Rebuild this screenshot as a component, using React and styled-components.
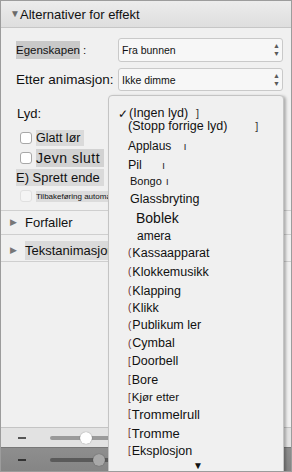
import React from "react";
import styled, { createGlobalStyle } from "styled-components";

const Global = createGlobalStyle`
  html, body { margin: 0; padding: 0; background: #f0f0f0; }
  body { font-family: "Liberation Sans", Arial, sans-serif; color: #111; }
`;

const Window = styled.div`
  position: relative;
  width: 292px;
  height: 472px;
  box-sizing: border-box;
  border: 1px solid #9c9c9c;
  background: #f0f0f0;
  display: flex;
  flex-direction: column;
  overflow: hidden;
`;

const Header = styled.div`
  height: 26px;
  flex: none;
  display: flex;
  align-items: center;
  gap: 1px;
  padding-left: 9px;
  background: linear-gradient(#ececec, #dedede);
  border-bottom: 1px solid #c6c6c6;
  font-size: 13px;
  color: #111;
`;

const Tri = styled.span`
  font-size: ${(p) => p.$size || 9}px;
  color: ${(p) => p.$color || "#6a6a6a"};
  line-height: 1;
  width: ${(p) => p.$w || 9}px;
`;

const Form = styled.div`
  padding: 10px 8px 0 0;
  display: flex;
  flex-direction: column;
  flex: none;
`;

const Row = styled.div`
  display: grid;
  grid-template-columns: 117px 1fr;
  align-items: center;
  height: ${(p) => p.$h}px;
  margin-top: ${(p) => p.$mt || 0}px;
`;

const Label = styled.span`
  justify-self: start;
  margin-left: ${(p) => p.$ml || 15}px;
  font-size: ${(p) => p.$size || 13}px;
  color: #111;
  white-space: nowrap;
`;

const Hl = styled.span`
  background: #c9c9c9;
  padding: 3px 0;
  margin-right: 3px;
`;

const Select = styled.div`
  height: 100%;
  box-sizing: border-box;
  border: 1px solid #c9c9c9;
  border-radius: 3px;
  background: #f7f7f7;
  display: flex;
  align-items: center;
  justify-content: space-between;
  padding: 0 2px 0 3px;
  font-size: 10.5px;
  color: #111;
`;

const Spin = styled.span`
  display: flex;
  flex-direction: column;
  font-size: 7px;
  line-height: 8px;
  color: #5a5a5a;
`;

const Checks = styled.div`
  display: flex;
  flex-direction: column;
  padding-top: 4px;
  padding-bottom: 6px;
  flex: none;
`;

const CheckRow = styled.div`
  display: flex;
  align-items: center;
  height: ${(p) => p.$h}px;
  padding-left: ${(p) => p.$pl ?? 19}px;
  gap: 4px;
`;

const Box = styled.span`
  width: 12px;
  height: 12px;
  box-sizing: border-box;
  border: 1px solid ${(p) => (p.$dim ? "#e0e0e0" : "#a8a8a8")};
  border-radius: 3px;
  background: ${(p) => (p.$dim ? "#f4f4f4" : "#fff")};
  flex: none;
`;

const CheckText = styled.span`
  font-size: ${(p) => p.$size}px;
  background: ${(p) => p.$hl};
  padding: 1px 4px 1px 0;
  white-space: nowrap;
  letter-spacing: ${(p) => p.$ls || 0}px;
`;

const Section = styled.div`
  height: ${(p) => p.$h}px;
  flex: none;
  display: flex;
  align-items: center;
  gap: 6px;
  padding-left: 9px;
  padding-top: ${(p) => p.$pt || 0}px;
  border-top: ${(p) => (p.$top ? "1px solid #cfcfcf" : "none")};
  border-bottom: 1px solid #cfcfcf;
  font-size: 13px;
`;

const SectionText = styled.span`
  background: ${(p) => p.$hl || "transparent"};
  padding: 2px 0;
`;

const Spacer = styled.div`
  flex: 1;
`;

const Toolbar = styled.div`
  height: ${(p) => p.$h}px;
  flex: none;
  display: flex;
  align-items: center;
  padding-left: 17px;
  gap: 24px;
  background: ${(p) => p.$bg};
  border-top: 1px solid ${(p) => p.$line};
`;

const Minus = styled.span`
  width: 8px;
  height: 2px;
  background: ${(p) => p.$c};
`;

const Track = styled.div`
  position: relative;
  width: 120px;
  height: 4px;
  border-radius: 2px;
  background: ${(p) => p.$c};
`;

const Knob = styled.span`
  position: absolute;
  top: -4px;
  width: 12px;
  height: 12px;
  border-radius: 50%;
  background: ${(p) => p.$c};
  box-shadow: 0 0 1px rgba(0, 0, 0, 0.5);
`;

const Menu = styled.div`
  position: absolute;
  left: 107px;
  top: 94px;
  width: 176px;
  bottom: -4px;
  box-sizing: border-box;
  border: 1px solid #c4c4c4;
  border-radius: 4px 4px 0 0;
  background: #f0f0f0;
  box-shadow: 2px 1px 3px rgba(0, 0, 0, 0.28);
  padding-top: 14px;
  display: flex;
  flex-direction: column;
`;

const Item = styled.div`
  height: ${(p) => p.$h}px;
  display: flex;
  align-items: center;
  padding-left: ${(p) => p.$pl}px;
  font-size: ${(p) => p.$size}px;
  line-height: 1;
  color: #111;
  white-space: nowrap;
  flex: none;
`;

const Check = styled.span`
  width: 11px;
  font-size: 12px;
  margin-left: -11px;
`;

const Pre = styled.span`
  font-size: 10px;
  color: #6a3030;
  margin-right: 1px;
  flex: none;
`;

const Trail = styled.span`
  font-size: 11px;
  color: #333;
  margin-left: ${(p) => p.$ml}px;
`;

const MoreArrow = styled.div`
  margin-top: 2px;
  text-align: center;
  font-size: 10px;
  line-height: 10px;
  color: #111;
  padding-left: 4px;
`;

const items = [
  { t: "(Ingen lyd)", h: 7, pl: 20, s: 12.5, check: true, trail: "]", tm: 8 },
  { t: "(Stopp forrige lyd)", h: 18, pl: 19, s: 12.5, trail: "]", tm: 28 },
  { t: "Applaus", h: 22, pl: 19, s: 12, trail: "ı", tm: 12 },
  { t: "Pil", h: 16, pl: 19, s: 12.5, trail: "ı", tm: 20 },
  { t: "Bongo", h: 17, pl: 21, s: 11, trail: "ı", tm: 4 },
  { t: "Glassbryting", h: 19, pl: 21, s: 12.5 },
  { t: "Boblek", h: 18, pl: 27, s: 14 },
  { t: "amera", h: 18, pl: 28, s: 12 },
  { t: "Kassaapparat", h: 16, pl: 19, s: 12.5, pre: "(" },
  { t: "Klokkemusikk", h: 22, pl: 19, s: 12.5, pre: "(" },
  { t: "Klapping", h: 16, pl: 19, s: 12.5, pre: "(" },
  { t: "Klikk", h: 18, pl: 19, s: 12.5, pre: "(" },
  { t: "Publikum ler", h: 17, pl: 19, s: 12.5, pre: "(" },
  { t: "Cymbal", h: 19, pl: 19, s: 12.5, pre: "(" },
  { t: "Doorbell", h: 17, pl: 19, s: 12.5, pre: "[" },
  { t: "Bore", h: 20, pl: 19, s: 12.5, pre: "[" },
  { t: "Kjør etter", h: 15, pl: 19, s: 11.5, pre: "[" },
  { t: "Trommelrull", h: 18, pl: 19, s: 13, pre: "[" },
  { t: "Tromme", h: 20, pl: 19, s: 13, pre: "[" },
  { t: "Eksplosjon", h: 16, pl: 19, s: 12.5, pre: "[" },
];

export default function App() {
  return (
    <>
      <Global />
      <Window>
        <Header>
          <Tri $size={10} $w={9}>▼</Tri>
          <span>Alternativer for effekt</span>
        </Header>
        <Form>
          <Row $h={24}>
            <Label $size={11.5}>
              <Hl>Egenskapen</Hl>:
            </Label>
            <Select>
              <span>Fra bunnen</span>
              <Spin><span>▲</span><span>▼</span></Spin>
            </Select>
          </Row>
          <Row $h={23} $mt={6}>
            <Label $size={13.5}>Etter animasjon:</Label>
            <Select>
              <span>Ikke dimme</span>
              <Spin><span>▲</span><span>▼</span></Spin>
            </Select>
          </Row>
          <Row $h={22} $mt={11}>
            <Label $size={13} $ml={16}>Lyd:</Label>
          </Row>
        </Form>
        <Checks>
          <CheckRow $h={20}>
            <Box />
            <CheckText $size={12.5} $hl="#dadada">Glatt lør</CheckText>
          </CheckRow>
          <CheckRow $h={19}>
            <Box />
            <CheckText $size={14} $hl="#d2d2d2" $ls={0.5}>Jevn slutt</CheckText>
          </CheckRow>
          <CheckRow $h={21} $pl={15}>
            <CheckText $size={13} $hl="#dadada">E) Sprett ende</CheckText>
          </CheckRow>
          <CheckRow $h={16}>
            <Box $dim />
            <CheckText $size={8} $hl="#dcdcdc">Tilbakeføring automatisk</CheckText>
          </CheckRow>
        </Checks>
        <Section $h={23} $top>
          <Tri $size={9} $color="#777">▶</Tri>
          <SectionText>Forfaller</SectionText>
        </Section>
        <Section $h={21} $pt={5}>
          <Tri $size={9} $color="#777">▶</Tri>
          <SectionText $hl="#dadada">Tekstanimasjon</SectionText>
        </Section>
        <Spacer />
        <Toolbar $h={19} $bg="#e2e2e2" $line="#c4c4c4">
          <Minus $c="#555" />
          <Track $c="#9a9a9a">
            <Knob $c="#fff" style={{ left: 30 }} />
          </Track>
        </Toolbar>
        <Toolbar $h={23} $bg="linear-gradient(#8e8e8e, #858585)" $line="#777">
          <Minus $c="#333" />
          <Track $c="#5a5a5a">
            <Knob $c="#a8a8a8" style={{ left: 43 }} />
          </Track>
        </Toolbar>
        <Menu>
          {items.map((it) => (
            <Item key={it.t} $h={it.h} $pl={it.pl} $size={it.s}>
              {it.check && <Check>✓</Check>}
              {it.pre && <Pre>{it.pre}</Pre>}
              <span>{it.t}</span>
              {it.trail && <Trail $ml={it.tm}>{it.trail}</Trail>}
            </Item>
          ))}
          <MoreArrow>▼</MoreArrow>
        </Menu>
      </Window>
    </>
  );
}
